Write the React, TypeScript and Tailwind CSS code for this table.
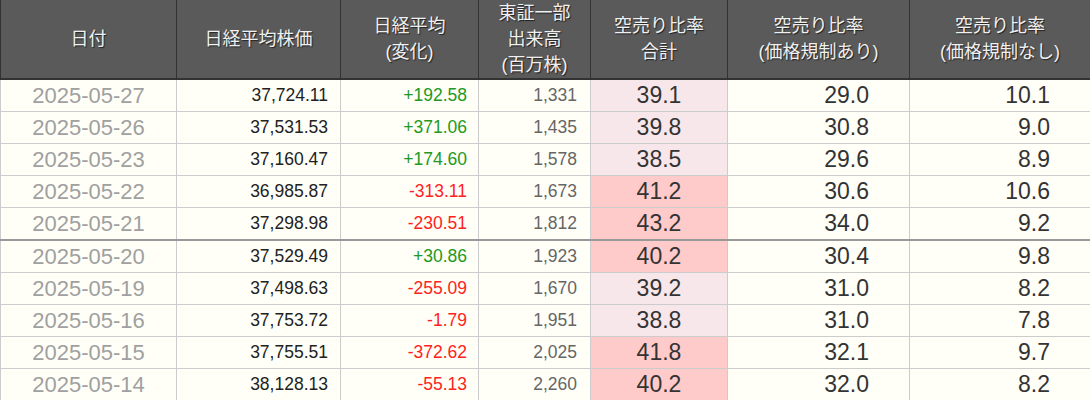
const rows = [
  { d: '2025-05-27', p: '37,724.11', c: '+192.58', v: '1,331', t: '39.1', a: '29.0', n: '10.1' },
  { d: '2025-05-26', p: '37,531.53', c: '+371.06', v: '1,435', t: '39.8', a: '30.8', n: '9.0' },
  { d: '2025-05-23', p: '37,160.47', c: '+174.60', v: '1,578', t: '38.5', a: '29.6', n: '8.9' },
  { d: '2025-05-22', p: '36,985.87', c: '-313.11', v: '1,673', t: '41.2', a: '30.6', n: '10.6' },
  { d: '2025-05-21', p: '37,298.98', c: '-230.51', v: '1,812', t: '43.2', a: '34.0', n: '9.2', week: true },
  { d: '2025-05-20', p: '37,529.49', c: '+30.86', v: '1,923', t: '40.2', a: '30.4', n: '9.8' },
  { d: '2025-05-19', p: '37,498.63', c: '-255.09', v: '1,670', t: '39.2', a: '31.0', n: '8.2' },
  { d: '2025-05-16', p: '37,753.72', c: '-1.79', v: '1,951', t: '38.8', a: '31.0', n: '7.8' },
  { d: '2025-05-15', p: '37,755.51', c: '-372.62', v: '2,025', t: '41.8', a: '32.1', n: '9.7' },
  { d: '2025-05-14', p: '38,128.13', c: '-55.13', v: '2,260', t: '40.2', a: '32.0', n: '8.2' },
];

const headers = [
  { w: 'w-[176px]', lines: ['日付'] },
  { w: 'w-[164px]', lines: ['日経平均株価'] },
  { w: 'w-[138px]', lines: ['日経平均', '(変化)'] },
  { w: 'w-[112px]', lines: ['東証一部', '出来高', '(百万株)'] },
  { w: 'w-[137px]', lines: ['空売り比率', '合計'] },
  { w: 'w-[182px]', lines: ['空売り比率', '(価格規制あり)'] },
  { w: 'w-[181px]', lines: ['空売り比率', '(価格規制なし)'] },
];

export default function App() {
  return (
    <div className="w-[1090px] h-[400px] overflow-hidden bg-white font-['Liberation_Sans','Noto_Sans_CJK_JP',sans-serif]">
      <table className="w-[1090px] table-fixed border-collapse">
        <thead>
          <tr>
            {headers.map((h) => (
              <th
                key={h.lines.join()}
                className={`${h.w} h-[79px] p-0 bg-[#5a5a5a] border-x border-x-[#333] border-b-2 border-b-[#333] text-[18px] font-normal leading-[26px] text-[#f0f0f0] [text-shadow:1px_1px_1px_#222] text-center align-middle`}
              >
                {h.lines.map((l) => (
                  <div key={l}>{l}</div>
                ))}
              </th>
            ))}
          </tr>
        </thead>
        <tbody className="bg-[#fffff8] leading-[31px]">
          {rows.map((r) => {
            const up = r.c.startsWith('+');
            const hot = parseFloat(r.t) >= 40;
            const b = r.week ? 'border-b-2 border-b-[#999]' : 'border-b border-b-[#ccc]';
            return (
              <tr key={r.d}>
                <td className={`h-[31px] p-0 border-x border-x-[#ccc] ${b} text-center text-[22px] text-[#a0a0a0]`}>{r.d}</td>
                <td className={`p-0 pr-3 border-x border-x-[#ccc] ${b} text-right text-[17.5px] text-[#222]`}>{r.p}</td>
                <td className={`p-0 pr-[11px] border-x border-x-[#ccc] ${b} text-right text-[17.5px] ${up ? 'text-[#229922]' : 'text-[#ff2222]'}`}>{r.c}</td>
                <td className={`p-0 pr-[13px] border-x border-x-[#ccc] ${b} text-right text-[17.5px] text-[#666]`}>{r.v}</td>
                <td className={`p-0 border-x border-x-[#ccc] ${b} text-center text-[23px] text-[#333] ${hot ? 'bg-[#ffcaca]' : 'bg-[#f7e7ea]'}`}>{r.t}</td>
                <td className={`p-0 pr-10 border-x border-x-[#ccc] ${b} text-right text-[23px] text-[#333]`}>{r.a}</td>
                <td className={`p-0 pr-10 border-x border-x-[#ccc] ${b} text-right text-[23px] text-[#333]`}>{r.n}</td>
              </tr>
            );
          })}
        </tbody>
      </table>
    </div>
  );
}
